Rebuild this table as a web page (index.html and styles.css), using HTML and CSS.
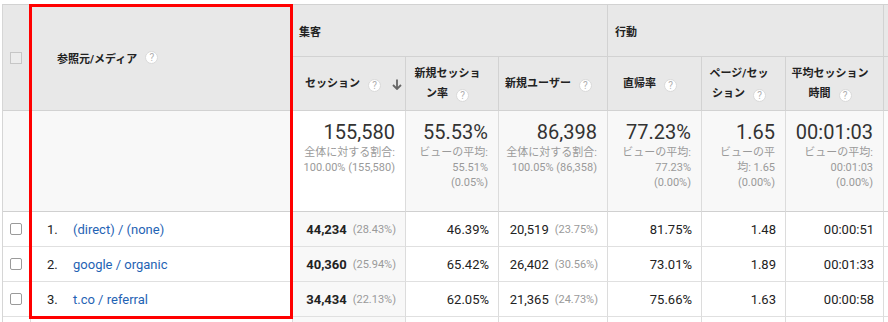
FILE: index.html
```html
<!DOCTYPE html>
<html lang="ja">
<head>
<meta charset="utf-8">
<title>参照元/メディア</title>
<link rel="stylesheet" href="styles.css">
</head>
<body>
<div class="page">
  <div class="report">
    <div class="cell head cb-head rows2"><span class="cbox cbox-head"></span></div>
    <div class="cell head src-head rows2">参照元/メディア<span class="help">?</span></div>
    <div class="cell head group cols3">集客</div>
    <div class="cell head group group-b cols3">行動</div>
    <div class="cell head group"></div>

    <div class="cell head metric sort"><span>セッション<span class="help">?</span></span><svg class="arrow" width="10" height="11" viewBox="0 0 10 11"><path d="M5 0.5V10M1 6l4 4 4-4" fill="none" stroke="#666" stroke-width="1.8"/></svg></div>
    <div class="cell head metric center"><span>新規セッショ<br>ン率<span class="help">?</span></span></div>
    <div class="cell head metric center"><span>新規ユーザー<span class="help">?</span></span></div>
    <div class="cell head metric center"><span>直帰率<span class="help">?</span></span></div>
    <div class="cell head metric center"><span>ページ/セッ<br>ション<span class="help">?</span></span></div>
    <div class="cell head metric center"><span>平均セッション<br>時間<span class="help">?</span></span></div>
    <div class="cell head metric"></div>

    <div class="cell sum"></div>
    <div class="cell sum"></div>
    <div class="cell sum total sel"><div class="big">155,580</div><div class="sub">全体に対する割合:<br>100.00% (155,580)</div></div>
    <div class="cell sum total"><div class="big">55.53%</div><div class="sub">ビューの平均:<br>55.51%<br>(0.05%)</div></div>
    <div class="cell sum total"><div class="big">86,398</div><div class="sub">全体に対する割合:<br>100.05% (86,358)</div></div>
    <div class="cell sum total"><div class="big">77.23%</div><div class="sub">ビューの平均:<br>77.23%<br>(0.00%)</div></div>
    <div class="cell sum total"><div class="big">1.65</div><div class="sub">ビューの平<br>均: 1.65<br>(0.00%)</div></div>
    <div class="cell sum total"><div class="big">00:01:03</div><div class="sub">ビューの平均:<br>00:01:03<br>(0.00%)</div></div>
    <div class="cell sum sum-end"></div>

    <div class="cell row cb"><span class="cbox"></span></div>
    <div class="cell row src"><span class="idx">1.</span><span class="link">(direct) / (none)</span></div>
    <div class="cell row num sel"><b>44,234</b><span class="pct">(28.43%)</span></div>
    <div class="cell row num">46.39%</div>
    <div class="cell row num">20,519<span class="pct">(23.75%)</span></div>
    <div class="cell row num">81.75%</div>
    <div class="cell row num">1.48</div>
    <div class="cell row num">00:00:51</div>
    <div class="cell row"></div>

    <div class="cell row cb"><span class="cbox"></span></div>
    <div class="cell row src"><span class="idx">2.</span><span class="link">google / organic</span></div>
    <div class="cell row num sel"><b>40,360</b><span class="pct">(25.94%)</span></div>
    <div class="cell row num">65.42%</div>
    <div class="cell row num">26,402<span class="pct">(30.56%)</span></div>
    <div class="cell row num">73.01%</div>
    <div class="cell row num">1.89</div>
    <div class="cell row num">00:01:33</div>
    <div class="cell row"></div>

    <div class="cell row cb"><span class="cbox"></span></div>
    <div class="cell row src"><span class="idx">3.</span><span class="link">t.co / referral</span></div>
    <div class="cell row num sel"><b>34,434</b><span class="pct">(22.13%)</span></div>
    <div class="cell row num">62.05%</div>
    <div class="cell row num">21,365<span class="pct">(24.73%)</span></div>
    <div class="cell row num">75.66%</div>
    <div class="cell row num">1.63</div>
    <div class="cell row num">00:00:58</div>
    <div class="cell row"></div>

    <div class="cell row cb"></div>
    <div class="cell row src"></div>
    <div class="cell row num sel"></div>
    <div class="cell row num"></div>
    <div class="cell row num"></div>
    <div class="cell row num"></div>
    <div class="cell row num"></div>
    <div class="cell row num"></div>
    <div class="cell row"></div>
  </div>
  <div class="focus"></div>
</div>
</body>
</html>
```

FILE: styles.css
```css
html, body {
  margin: 0;
  padding: 0;
  background: #fff;
  overflow: hidden;
  width: 888px;
  height: 322px;
}

.page {
  position: relative;
  box-sizing: border-box;
  width: 888px;
  height: 322px;
  overflow: hidden;
  padding: 4px 0 0 2px;
  font-family: Roboto, "Noto Sans CJK JP", sans-serif;
  color: #222;
}

.report {
  display: grid;
  grid-template-columns: 28px 262px 113px 93px 109px 94px 84px 98px 100px;
  grid-template-rows: 52px 54px 101px 35px 35px 35px 35px;
  width: max-content;
  border-top: 1px solid #d2d2d2;
  border-left: 1px solid #d6d6d6;
}

.cell {
  box-sizing: border-box;
  border-right: 1px solid #dcdcdc;
  border-bottom: 1px solid #e0e0e0;
  min-width: 0;
}

.rows2 { grid-row: span 2; }
.cols3 { grid-column: span 3; }

.head {
  background: #e8e8e8;
  border-color: #d2d2d2;
  font-size: 11px;
  font-weight: 700;
  display: flex;
  align-items: center;
}

.cb-head { padding-left: 7px; }
.src-head { padding-left: 26px; }

.group { padding-left: 6px; }
.group-b { padding-left: 7px; }

.metric { line-height: 20px; }

.sort {
  justify-content: space-between;
  padding: 0 3px 0 12px;
}
.arrow { display: block; margin-top: 1px; }

.center {
  justify-content: center;
  text-align: center;
  padding: 0 13px 0 4px;
}

.help {
  display: inline-block;
  box-sizing: border-box;
  width: 13px;
  height: 13px;
  margin-left: 8px;
  border-radius: 50%;
  background: #fff;
  border: 1px solid #dadada;
  color: #b0b0b0;
  font-size: 10px;
  line-height: 11px;
  font-weight: 400;
  text-align: center;
  vertical-align: -2px;
}

.cbox {
  display: block;
  box-sizing: border-box;
  width: 12px;
  height: 12px;
  background: #fff;
  border: 1px solid #9a9a9a;
  border-radius: 2px;
}
.cbox-head {
  background: #ececec;
  border-color: #c6c6c6;
  border-radius: 0;
  margin-top: 1px;
}

.sum {
  background: #f8f8f8;
  border-bottom-color: #d0d0d0;
}
.sum.sel { background: #fff; }
.sum-end { background: #fcfcfc; }

.total {
  display: flex;
  flex-direction: column;
  align-items: flex-end;
  text-align: right;
  padding: 9px 10px 0 4px;
}
.big {
  font-size: 20px;
  line-height: 24px;
  color: #333;
  white-space: nowrap;
}
.sub {
  font-size: 11px;
  line-height: 15px;
  color: #9a9a9a;
  margin-top: 1px;
  white-space: nowrap;
}

.row {
  background: #fff;
  display: flex;
  align-items: center;
  font-size: 13px;
}
.row.sel { background: #f8f8f8; }

.cb { padding-left: 7px; }

.src { padding-left: 16px; }
.idx {
  display: inline-block;
  width: 26px;
  color: #222;
}
.link { color: #1f63b4; }

.num {
  justify-content: flex-end;
  padding-right: 9px;
  white-space: nowrap;
}
.num b { font-weight: 700; }

.pct {
  font-size: 11px;
  color: #9a9a9a;
  margin-left: 6px;
}

.focus {
  position: absolute;
  left: 29px;
  top: 4px;
  width: 264px;
  height: 315px;
  box-sizing: border-box;
  border: 3px solid #ff0000;
}
```
